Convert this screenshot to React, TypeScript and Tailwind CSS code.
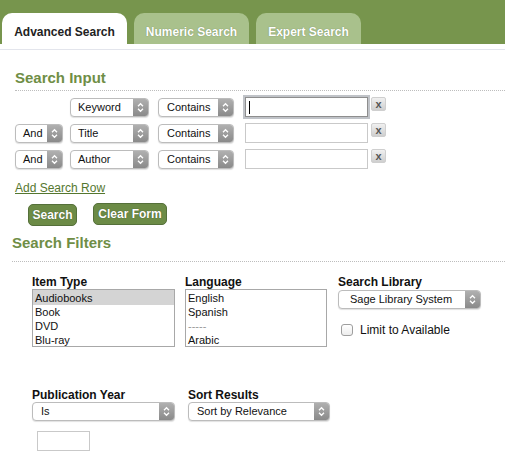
import React from "react";

const Chevrons = () => (
  <svg width="7" height="11" viewBox="0 0 7 11" fill="none" stroke="white" strokeWidth="1.3">
    <path d="M1 4.2 L3.5 1.7 L6 4.2" />
    <path d="M1 6.8 L3.5 9.3 L6 6.8" />
  </svg>
);

const Select = ({
  label,
  className,
  pad = "pl-[7px]",
}: {
  label: string;
  className: string;
  pad?: string;
}) => (
  <div
    className={`flex h-[19px] shrink-0 overflow-hidden rounded-[4px] border border-[#bcbcbc] bg-white shadow-[0_1px_1px_rgba(0,0,0,0.12)] ${className}`}
  >
    <span className={`flex-1 truncate text-[11px] leading-[17px] text-[#111] ${pad}`}>{label}</span>
    <span className="flex w-[15px] items-center justify-center bg-gradient-to-b from-[#b0b0b0] to-[#8a8a8a]">
      <Chevrons />
    </span>
  </div>
);

const RemoveBtn = () => (
  <div className="flex h-[14px] w-[15px] shrink-0 items-center justify-center rounded-[2px] border border-[#cfcfcf] bg-gradient-to-b from-[#f0f0f0] to-[#cfcfcf] text-[11px] font-bold leading-none text-[#555]">
    x
  </div>
);

const rows = [
  { join: null, field: "Keyword", focused: true },
  { join: "And", field: "Title", focused: false },
  { join: "And", field: "Author", focused: false },
];

const Tab = ({ label, active, w }: { label: string; active?: boolean; w: string }) => (
  <div
    className={`h-[31px] ${w} rounded-t-[10px] pt-[12px] text-center text-[12px] font-bold leading-[14px] ${
      active
        ? "bg-white text-[#222]"
        : "bg-[#a9c18c] text-white [text-shadow:0_0_1px_rgba(60,80,40,0.6)]"
    }`}
  >
    {label}
  </div>
);

export default function App() {
  return (
    <div className="h-[464px] w-[505px] overflow-hidden bg-white font-['Liberation_Sans',Arial,sans-serif] text-[#111]">
      <div className="flex h-[44px] items-end gap-[7px] bg-[#77954d] pl-[2px]">
        <Tab label="Advanced Search" active w="w-[125px]" />
        <Tab label="Numeric Search" w="w-[115px]" />
        <Tab label="Expert Search" w="w-[105px]" />
      </div>
      <div className="mt-[5px] h-px bg-[#e3e5ec]" />

      <section className="pl-[15px]">
        <h2 className="mt-[19px] text-[15px] font-bold leading-[17px] text-[#6f8e46]">Search Input</h2>
        <div className="mt-[4px] border-t border-dotted border-[#bdbdbd]" />

        <div className="mt-[6px] flex flex-col gap-[6px]">
          {rows.map((r, i) => (
            <div key={i} className="flex h-[20px] items-start">
              <div className="flex h-[20px] items-center">
                {r.join ? <Select label={r.join} className="w-[48px]" /> : <div className="w-[48px]" />}
              </div>
              <div className="ml-[7px] flex h-[20px] items-center">
                <Select label={r.field} className="w-[79px]" />
              </div>
              <div className="ml-[9px] flex h-[20px] items-center">
                <Select label="Contains" className="w-[76px]" pad="pl-[8px]" />
              </div>
              {r.focused ? (
                <div className="ml-[11px] flex h-[20px] w-[123px] items-center border border-[#8e8e8e] bg-white pl-[3px] shadow-[0_0_0_2px_rgba(140,145,155,0.55)]">
                  <div className="h-[13px] w-px bg-black" />
                </div>
              ) : (
                <div className="ml-[11px] h-[20px] w-[123px] border border-[#c9c9c9] bg-white" />
              )}
              <div className="ml-[3px]">
                <RemoveBtn />
              </div>
            </div>
          ))}
        </div>

        <a className="mt-[12px] block w-max text-[12px] leading-[14px] text-[#55772f] underline underline-offset-[1px]">
          Add Search Row
        </a>

        <div className="mt-[8px] flex items-start gap-[16px] pl-[13px]">
          <div className="mt-[1px] flex h-[22px] w-[49px] items-center justify-center rounded-[5px] border border-[#55703a] bg-[#6c8b46] text-[12px] font-bold text-white [text-shadow:0_0_1px_rgba(0,0,0,0.5)]">
            Search
          </div>
          <div className="flex h-[22px] w-[74px] items-center justify-center rounded-[5px] border border-[#55703a] bg-[#6c8b46] text-[12px] font-bold text-white [text-shadow:0_0_1px_rgba(0,0,0,0.5)]">
            Clear Form
          </div>
        </div>
      </section>

      <section className="pl-[12px]">
        <h2 className="mt-[8px] text-[15px] font-bold leading-[17px] text-[#6f8e46]">Search Filters</h2>
        <div className="mt-[10px] border-t border-dotted border-[#bdbdbd]" />

        <div className="mt-[14px] flex items-start pl-[20px]">
          <div className="w-[143px]">
            <div className="text-[12px] font-bold leading-[13px]">Item Type</div>
            <div className="h-[58px] border border-[#a8a8a8] bg-white pl-[2px] text-[11px] leading-[14px]">
              <div className="-ml-[2px] bg-[#d4d4d4] pl-[2px] pt-[1px]">Audiobooks</div>
              <div>Book</div>
              <div>DVD</div>
              <div>Blu-ray</div>
            </div>
          </div>
          <div className="ml-[10px] w-[142px]">
            <div className="text-[12px] font-bold leading-[13px]">Language</div>
            <div className="h-[58px] border border-[#a8a8a8] bg-white pl-[2px] pt-[1px] text-[11px] leading-[14px]">
              <div>English</div>
              <div>Spanish</div>
              <div className="text-[#999]">-----</div>
              <div>Arabic</div>
            </div>
          </div>
          <div className="ml-[11px] w-[143px]">
            <div className="text-[12px] font-bold leading-[13px]">Search Library</div>
            <div className="mt-[1px]">
              <Select label="Sage Library System" className="w-[143px]" pad="pl-[11px]" />
            </div>
            <label className="mt-[14px] flex items-center pl-[3px] text-[12px] leading-[14px]">
              <span className="h-[12px] w-[12px] rounded-[3px] border border-[#9e9e9e] bg-gradient-to-b from-white to-[#ededed]" />
              <span className="ml-[7px]">Limit to Available</span>
            </label>
          </div>
        </div>

        <div className="mt-[42px] flex items-start pl-[20px]">
          <div className="w-[143px]">
            <div className="text-[12px] font-bold leading-[13px]">Publication Year</div>
            <Select label="Is" className="w-[143px]" pad="pl-[8px]" />
            <div className="ml-[5px] mt-[10px] h-[20px] w-[53px] border border-[#c9c9c9] bg-white" />
          </div>
          <div className="ml-[13px] w-[142px]">
            <div className="text-[12px] font-bold leading-[13px]">Sort Results</div>
            <Select label="Sort by Relevance" className="w-[142px]" pad="pl-[8px]" />
          </div>
        </div>
      </section>
    </div>
  );
}
